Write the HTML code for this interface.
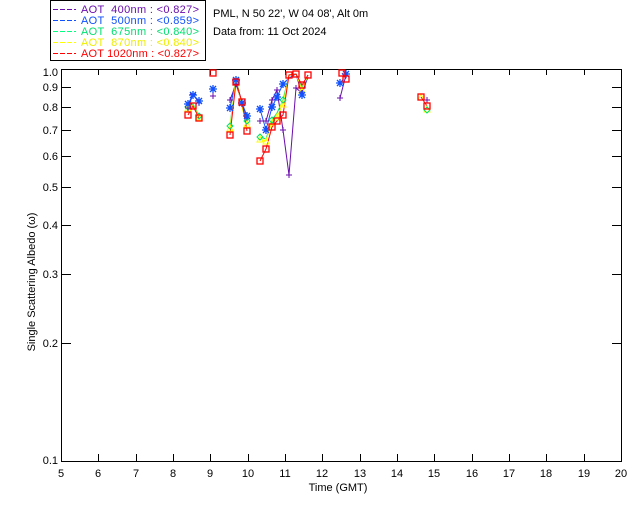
<!DOCTYPE html><html><head><style>body{margin:0;background:#fff}svg{display:block}text{font-family:"Liberation Sans",sans-serif;font-size:11px;white-space:pre}</style></head><body>
<svg width="640" height="512" xmlns="http://www.w3.org/2000/svg">
<defs><path id="st" d="M-4 0h8M0-4v8M-3-3l6 6M-3 3l6-6"/></defs>
<rect x="50.5" y="0.5" width="155" height="60" fill="none" stroke="#000"/>
<g font-size="11">
<line x1="53" y1="9.5" x2="76" y2="9.5" stroke="#6a0dad" stroke-dasharray="5,2"/><text x="81" y="13" fill="#6a0dad" textLength="118">AOT  400nm : &lt;0.827&gt;</text>
<line x1="53" y1="20.5" x2="76" y2="20.5" stroke="#1050ff" stroke-dasharray="5,2"/><text x="81" y="24" fill="#1050ff" textLength="118">AOT  500nm : &lt;0.859&gt;</text>
<line x1="53" y1="31.5" x2="76" y2="31.5" stroke="#00ff80" stroke-dasharray="5,2"/><text x="81" y="35" fill="#00e070" textLength="118">AOT  675nm : &lt;0.840&gt;</text>
<line x1="53" y1="42.5" x2="76" y2="42.5" stroke="#ffff00" stroke-dasharray="5,2"/><text x="81" y="46" fill="#eeee00" textLength="118">AOT  870nm : &lt;0.840&gt;</text>
<line x1="53" y1="53.5" x2="76" y2="53.5" stroke="#ff0000" stroke-dasharray="5,2"/><text x="81" y="57" fill="#ff0000" textLength="118">AOT 1020nm : &lt;0.827&gt;</text>
</g>
<text x="213" y="17">PML, N 50 22', W 04 08', Alt 0m</text>
<text x="213" y="35">Data from: 11 Oct 2024</text>
<rect x="61.5" y="69.5" width="560" height="392" fill="none" stroke="#000"/>
<g stroke="#000">
<path d="M98.5 69v6M136.5 69v6M173.5 69v6M210.5 69v6M248.5 69v6M285.5 69v6M322.5 69v6M360.5 69v6M397.5 69v6M434.5 69v6M472.5 69v6M509.5 69v6M546.5 69v6M584.5 69v6"/>
<path d="M98.5 461v-7M136.5 461v-7M173.5 461v-7M210.5 461v-7M248.5 461v-7M285.5 461v-7M322.5 461v-7M360.5 461v-7M397.5 461v-7M434.5 461v-7M472.5 461v-7M509.5 461v-7M546.5 461v-7M584.5 461v-7"/>
<path d="M61 87.5h10M61 107.5h10M61 130.5h10M61 156.5h10M61 187.5h10M61 225.5h10M61 274.5h10M61 343.5h10M612 87.5h10M612 107.5h10M612 130.5h10M612 156.5h10M612 187.5h10M612 225.5h10M612 274.5h10M612 343.5h10"/>
</g>
<g font-size="10" text-anchor="end">
<text x="58" y="76">1.0</text><text x="58" y="91">0.9</text><text x="58" y="111">0.8</text><text x="58" y="134">0.7</text><text x="58" y="160">0.6</text><text x="58" y="191">0.5</text><text x="58" y="229">0.4</text><text x="58" y="278">0.3</text><text x="58" y="347">0.2</text><text x="58" y="464">0.1</text>
</g>
<g font-size="10" text-anchor="middle">
<text x="61" y="477">5</text><text x="98" y="477">6</text><text x="136" y="477">7</text><text x="173" y="477">8</text><text x="210" y="477">9</text><text x="248" y="477">10</text><text x="285" y="477">11</text><text x="322" y="477">12</text><text x="360" y="477">13</text><text x="397" y="477">14</text><text x="434" y="477">15</text><text x="472" y="477">16</text><text x="509" y="477">17</text><text x="546" y="477">18</text><text x="584" y="477">19</text><text x="621" y="477">20</text>
<text x="338" y="491">Time (GMT)</text>
</g>
<text font-size="10" transform="translate(35,282) rotate(-90)" text-anchor="middle">Single Scattering Albedo (ω)</text>
<g fill="none" stroke-width="1">
<polyline stroke="#6a0dad" points="188,108 193,94 199,103"/>
<polyline stroke="#6a0dad" points="230,100 236,84 242,103 247,118"/>
<polyline stroke="#6a0dad" points="260,121 266,121 272,100 277,90 283,130 289,175 296,88 302,93 308,77"/>
<polyline stroke="#6a0dad" points="340,98 346,75"/>
<polyline stroke="#1050ff" points="188,104 193,95 199,101"/>
<polyline stroke="#1050ff" points="230,108 236,80 242,103 247,116"/>
<polyline stroke="#1050ff" points="260,109 266,130 272,107 277,97 283,84 289,78 296,74 302,95 308,75"/>
<polyline stroke="#00e070" points="188,107 193,104 199,116"/>
<polyline stroke="#00e070" points="230,126 236,77 242,107 247,121"/>
<polyline stroke="#00e070" points="260,137 266,139 272,120 277,113 283,100 289,75 296,74 302,88 308,75"/>
<polyline stroke="#ffff00" points="188,108 193,105 199,117"/>
<polyline stroke="#ffff00" points="230,128 236,78 242,108 247,124"/>
<polyline stroke="#ffff00" points="260,139 266,141 272,122 277,117 283,104 289,75 296,74 302,90 308,75"/>
<polyline stroke="#ff0000" points="188,115 193,106 199,118"/>
<polyline stroke="#ff0000" points="230,135 236,82 242,102 247,131"/>
<polyline stroke="#ff0000" points="260,161 266,149 272,127 277,121 283,115 289,75 296,74 302,85 308,75"/>
<polyline stroke="#ff0000" points="342,73 346,79"/>
<polyline stroke="#ff0000" points="421,97 427,106"/>
</g>
<g fill="none" stroke="#ffff00" stroke-width="1">
<path d="M185 111l3-6 3 6zM196 120l3-6 3 6zM227 131l3-6 3 6zM244 127l3-6 3 6zM257 142l3-6 3 6zM263 144l3-6 3 6zM269 125l3-6 3 6zM274 120l3-6 3 6zM280 107l3-6 3 6zM299 93l3-6 3 6zM418 100l3-6 3 6zM424 112l3-6 3 6z"/>
</g>
<g fill="none" stroke="#00e070" stroke-width="1">
<path d="M188 104l3 3-3 3-3-3zM199 113l3 3-3 3-3-3zM230 123l3 3-3 3-3-3zM247 118l3 3-3 3-3-3zM260 134l3 3-3 3-3-3zM272 117l3 3-3 3-3-3zM283 97l3 3-3 3-3-3zM427 107l3 3-3 3-3-3z"/>
</g>
<g stroke="#6a0dad" stroke-width="1">
<path d="M185 108h6M188 105v6M190 94h6M193 91v6M196 103h6M199 100v6M210 96h6M213 93v6M227 100h6M230 97v6M233 84h6M236 81v6M244 118h6M247 115v6M257 121h6M260 118v6M263 121h6M266 118v6M269 100h6M272 97v6M274 90h6M277 87v6M280 130h6M283 127v6M286 175h6M289 172v6M293 88h6M296 85v6M299 93h6M302 90v6M337 98h6M340 95v6M424 100h6M427 97v6"/>
</g>
<g stroke="#1050ff" stroke-width="1.3" fill="none">
<use href="#st" x="188" y="104"/><use href="#st" x="193" y="95"/><use href="#st" x="199" y="101"/><use href="#st" x="213" y="89"/><use href="#st" x="230" y="108"/><use href="#st" x="236" y="80"/><use href="#st" x="242" y="103"/><use href="#st" x="247" y="116"/><use href="#st" x="260" y="109"/><use href="#st" x="266" y="130"/><use href="#st" x="272" y="107"/><use href="#st" x="277" y="97"/><use href="#st" x="283" y="84"/><use href="#st" x="302" y="95"/><use href="#st" x="340" y="83"/><use href="#st" x="346" y="74"/>
</g>
<g fill="none" stroke="#ff0000" stroke-width="1.3">
<rect x="185" y="112" width="6" height="6"/><rect x="190" y="103" width="6" height="6"/><rect x="196" y="115" width="6" height="6"/><rect x="210" y="70" width="6" height="6"/><rect x="227" y="132" width="6" height="6"/><rect x="233" y="79" width="6" height="6"/><rect x="239" y="99" width="6" height="6"/><rect x="244" y="128" width="6" height="6"/><rect x="257" y="158" width="6" height="6"/><rect x="263" y="146" width="6" height="6"/><rect x="269" y="124" width="6" height="6"/><rect x="274" y="118" width="6" height="6"/><rect x="280" y="112" width="6" height="6"/><rect x="286" y="72" width="6" height="6"/><rect x="293" y="71" width="6" height="6"/><rect x="299" y="82" width="6" height="6"/><rect x="305" y="72" width="6" height="6"/><rect x="339" y="70" width="6" height="6"/><rect x="343" y="76" width="6" height="6"/><rect x="418" y="94" width="6" height="6"/><rect x="424" y="103" width="6" height="6"/>
</g>
</svg>
</body></html>
